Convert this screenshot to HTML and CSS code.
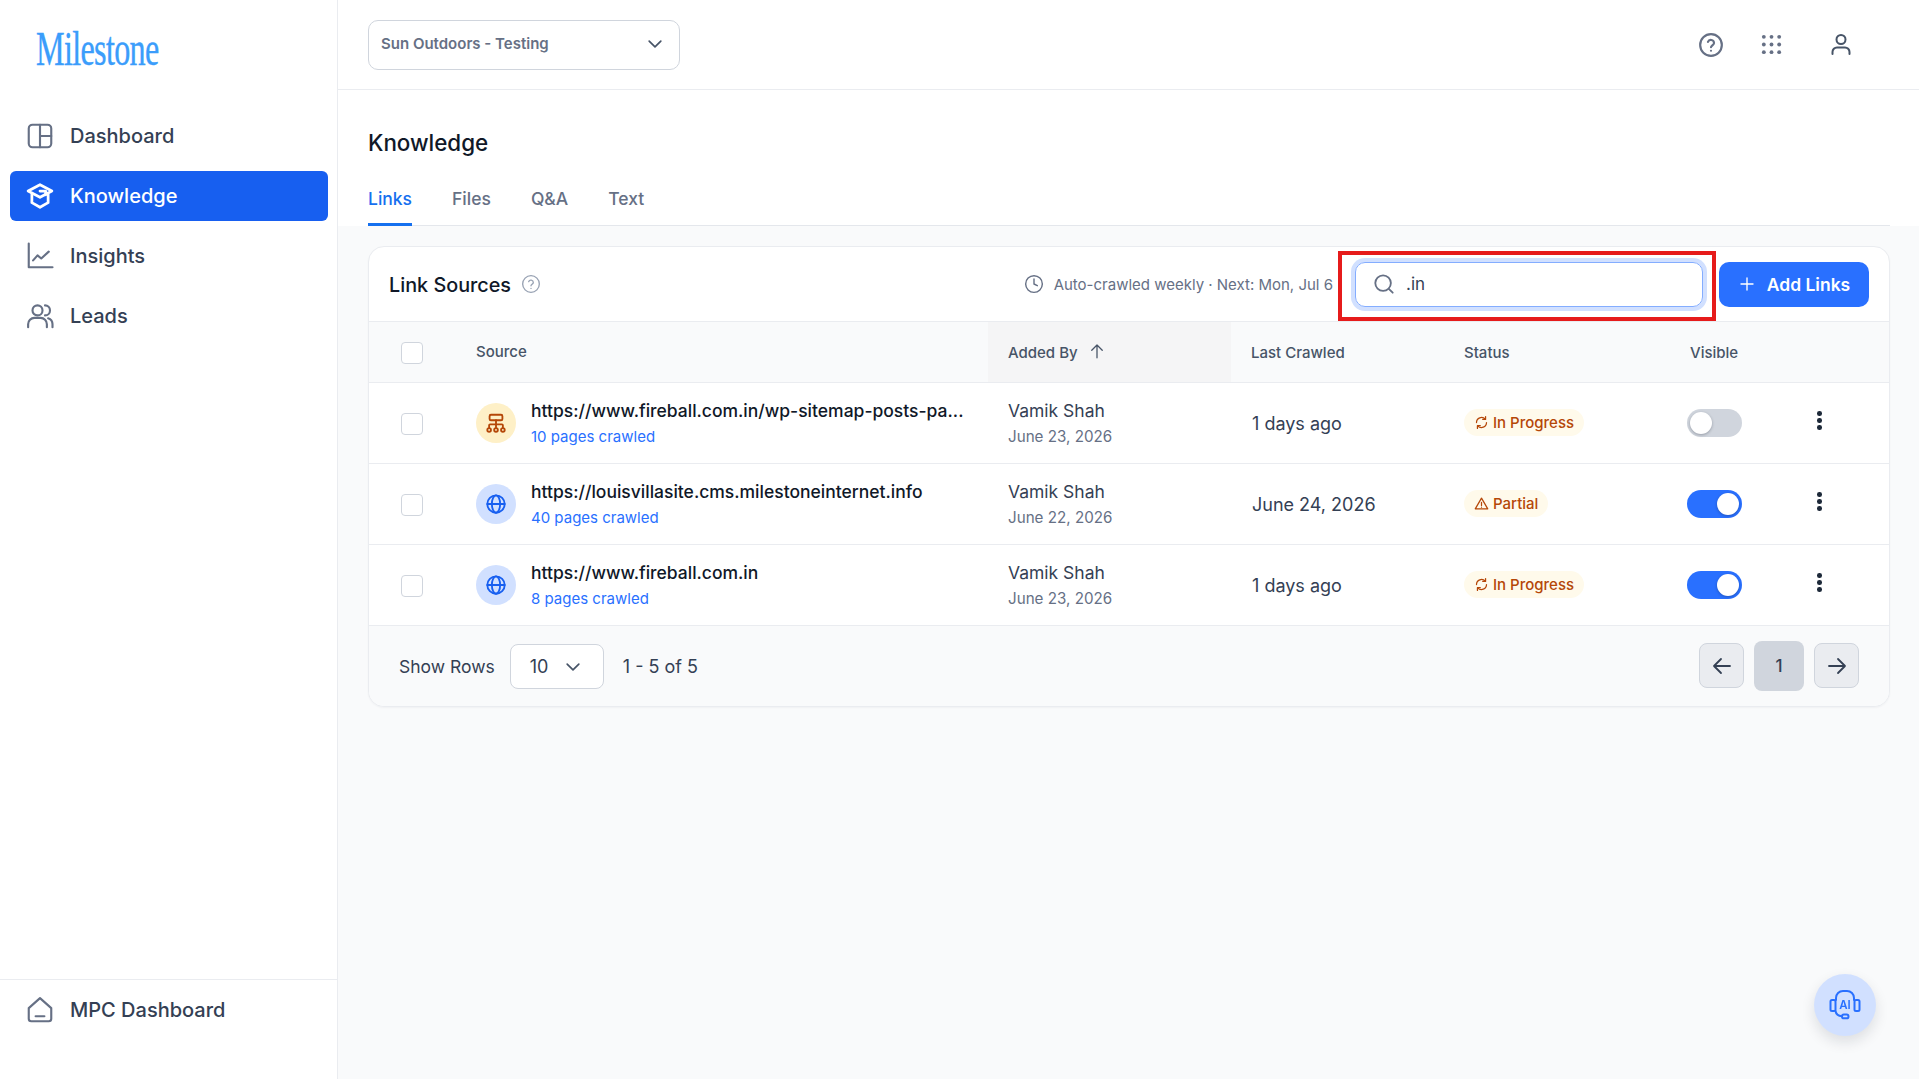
FILE: index.html
```html
<!DOCTYPE html>
<html lang="en">
<head>
    <meta charset="UTF-8">
    <title>Knowledge - Links</title>
    <link rel="stylesheet" href="styles.css">
</head>
<body>
<div class="app">
    <aside class="sidebar">
        <div class="logo"><span class="logo-text">Milestone</span></div>
        <nav class="nav">
            <a class="nav-item">
                <svg class="nav-icon" viewBox="0 0 24 24"><rect x="3" y="3" width="18" height="18" rx="3"/><path d="M12 3v18M12 12h9"/></svg>
                Dashboard
            </a>
            <a class="nav-item active">
                <svg class="nav-icon" viewBox="0 0 24 24"><path d="M12 3 2.500 8l9.500 5 9.500-5z"/><path d="M5.500 10.500v6.800L12 21l6.500-3.700v-6.800"/><path d="M12 8h4.500v3"/></svg>
                Knowledge
            </a>
            <a class="nav-item">
                <svg class="nav-icon" viewBox="0 0 24 24"><path d="M3 2v19h19"/><path d="M6.500 15.500 10 11.500l3 2.500 6-5.500"/></svg>
                Insights
            </a>
            <a class="nav-item">
                <svg class="nav-icon" viewBox="0 0 24 24"><circle cx="10" cy="7.500" r="4"/><path d="M2.500 21v-2.500a5 5 0 0 1 5-5h5a5 5 0 0 1 5 5V21"/><path d="M16 3.500a4 4 0 0 1 0 8"/><path d="M18.500 13.800a5 5 0 0 1 3.500 4.700V21"/></svg>
                Leads
            </a>
        </nav>
        <div class="sidebar-bottom">
            <a class="nav-item">
                <svg class="nav-icon" viewBox="0 0 24 24"><path d="M3 10.500 12 2.500l9 8V19a2 2 0 0 1-2 2H5a2 2 0 0 1-2-2z"/><path d="M8.500 17h7"/></svg>
                MPC Dashboard
            </a>
        </div>
    </aside>

    <main class="main">
        <header class="topbar">
            <div class="property-select">
                <span>Sun Outdoors - Testing</span>
                <svg class="chevron" viewBox="0 0 24 24"><path d="m5 8.500 7 7 7-7"/></svg>
            </div>
            <div class="top-icons">
                <svg class="top-icon help-top" viewBox="0 0 24 24"><circle cx="12" cy="12" r="10"/><path d="M9.200 9.200a2.900 2.900 0 0 1 5.600.9c0 1.900-2.800 2.500-2.800 4"/><path d="M12 17.300h.01"/></svg>
                <svg class="top-icon grid-icon" viewBox="0 0 24 24"><g class="dots"><circle cx="4" cy="4" r="2"/><circle cx="12" cy="4" r="2"/><circle cx="20" cy="4" r="2"/><circle cx="4" cy="12" r="2"/><circle cx="12" cy="12" r="2"/><circle cx="20" cy="12" r="2"/><circle cx="4" cy="20" r="2"/><circle cx="12" cy="20" r="2"/><circle cx="20" cy="20" r="2"/></g></svg>
                <svg class="top-icon user-icon" viewBox="0 0 24 24"><circle cx="12" cy="7.500" r="4.500"/><path d="M3.500 22v-2a4.500 4.500 0 0 1 4.500-4.500h8a4.500 4.500 0 0 1 4.500 4.500v2"/></svg>
            </div>
        </header>

        <section class="page-head">
            <h1 class="page-title">Knowledge</h1>
            <div class="tabs">
                <a class="tab active">Links</a>
                <a class="tab">Files</a>
                <a class="tab">Q&amp;A</a>
                <a class="tab">Text</a>
            </div>
        </section>

        <section class="content">
            <div class="card">
                <div class="card-head">
                    <h2 class="card-title">Link Sources</h2>
                    <svg class="help-icon" viewBox="0 0 24 24"><circle cx="12" cy="12" r="10"/><path d="M9.200 9.200a2.900 2.900 0 0 1 5.600.9c0 1.900-2.800 2.500-2.800 4"/><path d="M12 17.300h.01"/></svg>
                    <div class="crawl-note">
                        <svg class="clock-icon" viewBox="0 0 24 24"><circle cx="12" cy="12" r="10"/><path d="M12 6v6l4 2"/></svg>
                        Auto-crawled weekly · Next: Mon, Jul 6
                    </div>
                    <div class="search-wrap">
                        <div class="search">
                            <svg class="search-icon" viewBox="0 0 24 24"><circle cx="11" cy="11" r="8.500"/><path d="m17.500 17.500 4 4"/></svg>
                            <span>.in</span>
                        </div>
                        <div class="highlight"></div>
                    </div>
                    <button class="add-button">
                        <svg class="plus-icon" viewBox="0 0 24 24"><path d="M12 4v16M4 12h16"/></svg>
                        Add Links
                    </button>
                </div>

                <table class="links-table">
                    <colgroup>
                        <col class="col-check"><col class="col-source"><col class="col-added"><col class="col-crawled"><col class="col-status"><col class="col-visible"><col class="col-menu">
                    </colgroup>
                    <thead>
                        <tr>
                            <th class="check-cell"><span class="checkbox"></span></th>
                            <th class="source-head">Source</th>
                            <th class="sorted">
                                <span class="sort-label">Added By
                                    <svg class="sort-icon" viewBox="0 0 24 24"><path d="M12 21V4M5 11l7-7 7 7"/></svg>
                                </span>
                            </th>
                            <th>Last Crawled</th>
                            <th>Status</th>
                            <th class="visible-head">Visible</th>
                            <th></th>
                        </tr>
                    </thead>
                    <tbody>
                        <tr>
                            <td class="check-cell"><span class="checkbox"></span></td>
                            <td>
                                <div class="source">
                                    <span class="source-icon sitemap">
                                        <svg viewBox="0 0 24 24"><rect x="5" y="3" width="14" height="6" rx="1.500"/><path d="M12 9v8M4.500 17v-2.500a1 1 0 0 1 1-1h13a1 1 0 0 1 1 1V17"/><circle cx="4.500" cy="19.500" r="2"/><circle cx="12" cy="19.500" r="2"/><circle cx="19.500" cy="19.500" r="2"/></svg>
                                    </span>
                                    <div class="source-text">
                                        <div class="source-url">https://www.fireball.com.in/wp-sitemap-posts-pa...</div>
                                        <div class="source-pages">10 pages crawled</div>
                                    </div>
                                </div>
                            </td>
                            <td><div class="person">Vamik Shah</div><div class="person-date">June 23, 2026</div></td>
                            <td class="crawled">1 days ago</td>
                            <td>
                                <span class="badge">
                                    <svg class="badge-icon" viewBox="0 0 24 24"><path d="M20 12a8 8 0 0 1-14 5.300M4 12a8 8 0 0 1 14-5.300"/><path d="M18.500 2.500v4.500H14M5.500 21.500V17H10"/></svg>
                                    In Progress
                                </span>
                            </td>
                            <td><span class="toggle"><span class="knob"></span></span></td>
                            <td><span class="kebab"><i></i><i></i><i></i></span></td>
                        </tr>
                        <tr>
                            <td class="check-cell"><span class="checkbox"></span></td>
                            <td>
                                <div class="source">
                                    <span class="source-icon globe">
                                        <svg viewBox="0 0 24 24"><circle cx="12" cy="12" r="9.500"/><ellipse cx="12" cy="12" rx="4.500" ry="9.500"/><path d="M2.500 12h19"/></svg>
                                    </span>
                                    <div class="source-text">
                                        <div class="source-url">https://louisvillasite.cms.milestoneinternet.info</div>
                                        <div class="source-pages">40 pages crawled</div>
                                    </div>
                                </div>
                            </td>
                            <td><div class="person">Vamik Shah</div><div class="person-date">June 22, 2026</div></td>
                            <td class="crawled">June 24, 2026</td>
                            <td>
                                <span class="badge">
                                    <svg class="badge-icon" viewBox="0 0 24 24"><path d="M12 3.500 2 20.500h20z"/><path d="M12 10v5M12 17.800h.01"/></svg>
                                    Partial
                                </span>
                            </td>
                            <td><span class="toggle on"><span class="knob"></span></span></td>
                            <td><span class="kebab"><i></i><i></i><i></i></span></td>
                        </tr>
                        <tr>
                            <td class="check-cell"><span class="checkbox"></span></td>
                            <td>
                                <div class="source">
                                    <span class="source-icon globe">
                                        <svg viewBox="0 0 24 24"><circle cx="12" cy="12" r="9.500"/><ellipse cx="12" cy="12" rx="4.500" ry="9.500"/><path d="M2.500 12h19"/></svg>
                                    </span>
                                    <div class="source-text">
                                        <div class="source-url">https://www.fireball.com.in</div>
                                        <div class="source-pages">8 pages crawled</div>
                                    </div>
                                </div>
                            </td>
                            <td><div class="person">Vamik Shah</div><div class="person-date">June 23, 2026</div></td>
                            <td class="crawled">1 days ago</td>
                            <td>
                                <span class="badge">
                                    <svg class="badge-icon" viewBox="0 0 24 24"><path d="M20 12a8 8 0 0 1-14 5.300M4 12a8 8 0 0 1 14-5.300"/><path d="M18.500 2.500v4.500H14M5.500 21.500V17H10"/></svg>
                                    In Progress
                                </span>
                            </td>
                            <td><span class="toggle on"><span class="knob"></span></span></td>
                            <td><span class="kebab"><i></i><i></i><i></i></span></td>
                        </tr>
                    </tbody>
                </table>

                <div class="card-foot">
                    <span class="rows-label">Show Rows</span>
                    <div class="rows-select">
                        10
                        <svg class="rows-chevron" viewBox="0 0 24 24"><path d="m5 8.500 7 7 7-7"/></svg>
                    </div>
                    <span class="rows-range">1 - 5 of 5</span>
                    <div class="pager">
                        <button class="page-arrow"><svg viewBox="0 0 24 24"><path d="M20 12H4M11 5l-7 7 7 7"/></svg></button>
                        <button class="page-number">1</button>
                        <button class="page-arrow"><svg viewBox="0 0 24 24"><path d="M4 12h16M13 5l7 7-7 7"/></svg></button>
                    </div>
                </div>
            </div>
        </section>
    </main>
</div>

<button class="ai-button">
    <svg viewBox="0 0 32 32">
        <path d="M7 11V9a7 7 0 0 1 7-7h4a7 7 0 0 1 7 7v2"/>
        <rect x="1.500" y="11" width="5" height="11" rx="1.500"/>
        <rect x="25.500" y="11" width="5" height="11" rx="1.500"/>
        <path d="M6.500 22c.5 3 3 5 6.500 5.300"/>
        <rect x="13" y="25.500" width="6.500" height="3.800" rx="1.900"/>
        <text class="ai-text" x="16" y="19.500" text-anchor="middle">AI</text>
    </svg>
</button>
</body>
</html>
```

FILE: styles.css
```css
* {
    box-sizing: border-box;
}

html, body {
    margin: 0;
    height: 100%;
    overflow: hidden;
}

body {
    font-family: Inter, "Noto Sans", sans-serif;
    color: #101828;
    background: #fff;
}

svg {
    fill: none;
    stroke: currentColor;
    stroke-width: 2;
    stroke-linecap: round;
    stroke-linejoin: round;
    flex-shrink: 0;
}

.app {
    display: flex;
    height: 100%;
}

/* Sidebar */
.sidebar {
    width: 338px;
    flex-shrink: 0;
    display: flex;
    flex-direction: column;
    border-right: 1px solid #eaecf0;
    background: #fff;
}

.logo {
    height: 90px;
    padding: 24px 0 0 36px;
    overflow: hidden;
}

.logo-text {
    display: inline-block;
    font-family: "Liberation Serif", serif;
    font-size: 48px;
    line-height: 50px;
    color: #3b9dfb;
    -webkit-text-stroke: 0.4px #3b9dfb;
    transform: scaleX(0.67);
    transform-origin: left center;
    letter-spacing: -1px;
}

.nav {
    display: flex;
    flex-direction: column;
    gap: 10px;
    padding: 21px 9px 0 10px;
    flex: 1;
}

.nav-item {
    display: flex;
    align-items: center;
    gap: 15px;
    height: 50px;
    padding-left: 15px;
    border-radius: 6px;
    font-size: 20px;
    font-weight: 500;
    color: #344054;
}

.nav-item.active {
    background: #175ff0;
    color: #fff;
}

.nav-icon {
    width: 30px;
    height: 30px;
    color: #667085;
    stroke-width: 1.7;
}

.nav-item.active .nav-icon {
    color: #fff;
    stroke-width: 2.2;
}

.sidebar-bottom {
    height: 100px;
    padding: 5px 9px 0 10px;
    border-top: 1px solid #eaecf0;
}

/* Top bar */
.main {
    flex: 1;
    min-width: 0;
    display: flex;
    flex-direction: column;
}

.topbar {
    height: 90px;
    flex-shrink: 0;
    display: flex;
    align-items: center;
    justify-content: space-between;
    padding: 0 66px 0 30px;
    border-bottom: 1px solid #eaecf0;
}

.property-select {
    width: 312px;
    height: 50px;
    display: flex;
    align-items: center;
    justify-content: space-between;
    padding: 0 14px 2px 12px;
    border: 1px solid #d0d5dd;
    border-radius: 10px;
    font-size: 15px;
    font-weight: 600;
    color: #667085;
}

.chevron {
    width: 20px;
    height: 20px;
    color: #475467;
}

.top-icons {
    display: flex;
    align-items: center;
}

.top-icon {
    width: 24px;
    height: 24px;
    color: #667085;
}

.help-top {
    width: 26px;
    height: 26px;
}

.grid-icon {
    width: 23px;
    height: 23px;
    margin-left: 36px;
}

.grid-icon .dots {
    fill: #667085;
    stroke: none;
}

.user-icon {
    margin: -2px 0 0 46px;
    color: #475467;
}

/* Page heading and tabs */
.page-head {
    flex-shrink: 0;
    padding: 0 29px 0 30px;
    background: #fff;
}

.page-title {
    margin: 0;
    padding-top: 38px;
    font-size: 22.400px;
    line-height: 30px;
    font-weight: 500;
    color: #101828;
}

.tabs {
    display: flex;
    gap: 40px;
    margin-top: 27px;
    height: 41px;
    border-bottom: 1px solid #e4e7ec;
}

.tab {
    height: 41px;
    padding-top: 2px;
    font-size: 17.500px;
    line-height: 24px;
    font-weight: 500;
    color: #667085;
}

.tab.active {
    color: #1570ef;
    border-bottom: 3px solid #1570ef;
}

.content {
    flex: 1;
    padding: 20px 29px 0 30px;
    background: #f9fafb;
}

/* Card */
.card {
    border: 1px solid #eaecf0;
    border-radius: 16px;
    background: #fff;
    overflow: hidden;
    box-shadow: 0 1px 2px rgba(16, 24, 40, 0.04);
}

.card-head {
    height: 75px;
    display: flex;
    align-items: center;
    padding: 0 20px;
    border-bottom: 1px solid #eaecf0;
}

.card-title {
    margin: 2px 0 0;
    font-size: 19.800px;
    font-weight: 500;
    color: #101828;
}

.help-icon {
    width: 20px;
    height: 20px;
    margin-left: 10px;
    color: #98a2b3;
    stroke-width: 1.6;
}

.crawl-note {
    margin-left: auto;
    display: flex;
    align-items: center;
    gap: 10px;
    font-size: 15px;
    color: #667085;
}

.clock-icon {
    width: 20px;
    height: 20px;
    color: #667085;
    stroke-width: 1.7;
}

.search-wrap {
    position: relative;
    margin-left: 22px;
}

.search {
    width: 348px;
    height: 45px;
    display: flex;
    align-items: center;
    gap: 11px;
    padding-left: 17px;
    border: 1px solid #84adff;
    border-radius: 10px;
    box-shadow: 0 0 0 4px #d1e0ff;
    font-size: 17px;
    color: #344054;
}

.search-icon {
    width: 22px;
    height: 22px;
    color: #667085;
    stroke-width: 2;
}

/* red marker drawn over the search field */
.highlight {
    position: absolute;
    top: -11px;
    bottom: -14px;
    left: -17px;
    right: -13px;
    border: 4px solid #e61b1b;
}

.add-button {
    margin-left: 16px;
    width: 150px;
    height: 45px;
    display: flex;
    align-items: center;
    justify-content: center;
    gap: 11px;
    border: none;
    border-radius: 10px;
    background: #2970ff;
    color: #fff;
    font-family: inherit;
    font-size: 17.500px;
    font-weight: 600;
}

.plus-icon {
    width: 18px;
    height: 18px;
    stroke-width: 1.8;
}

/* Table */
.links-table {
    width: 100%;
    border-collapse: collapse;
    table-layout: fixed;
}

.col-check { width: 107px; }
.col-source { width: 512px; }
.col-added { width: 243px; }
.col-crawled { width: 213px; }
.col-status { width: 243px; }
.col-visible { width: 105px; }

.links-table th {
    height: 60px;
    padding: 2px 20px 0;
    background: #f9fafb;
    border-bottom: 1px solid #eaecf0;
    text-align: left;
    font-size: 15px;
    font-weight: 500;
    color: #475467;
}

.links-table .sorted {
    background: #f5f5f6;
}

.sort-label {
    display: inline-flex;
    align-items: center;
    gap: 10px;
}

.sort-icon {
    width: 18px;
    height: 18px;
    margin-top: -4px;
    color: #475467;
    stroke-width: 1.7;
}

.links-table .source-head {
    padding: 0;
}

.links-table .visible-head {
    padding-left: 3px;
}

.links-table td {
    height: 81px;
    padding: 0 20px;
    border-bottom: 1px solid #eaecf0;
    vertical-align: middle;
}

.links-table td:nth-child(2),
.links-table td:nth-child(6) {
    padding: 0;
}

.links-table .check-cell {
    padding: 2px 0 0 32px;
}

.checkbox {
    display: block;
    width: 22px;
    height: 22px;
    border: 1px solid #d0d5dd;
    border-radius: 4px;
    background: #fff;
}

.source {
    display: flex;
    align-items: center;
    gap: 15px;
}

.source-icon {
    width: 40px;
    height: 40px;
    flex-shrink: 0;
    display: flex;
    align-items: center;
    justify-content: center;
    border-radius: 50%;
}

.source-icon svg {
    width: 22px;
    height: 22px;
}

.sitemap {
    background: #fef0c7;
    color: #b54708;
}

.globe {
    background: #d1e0ff;
    color: #175ff0;
}

.source-text {
    min-width: 0;
    margin-top: 1px;
}

.source-url {
    font-size: 17.500px;
    line-height: 24px;
    font-weight: 500;
    white-space: nowrap;
    color: #101828;
}

.source-pages {
    margin-top: 3px;
    font-size: 15px;
    line-height: 22px;
    color: #2970ff;
}

.person {
    margin-top: 2px;
    font-size: 17.500px;
    line-height: 24px;
    color: #344054;
}

.person-date {
    margin-top: 3px;
    font-size: 15.200px;
    line-height: 22px;
    color: #667085;
}

.links-table .crawled {
    padding: 2px 20px 0 21px;
    font-size: 18px;
    color: #344054;
}

.badge {
    display: inline-flex;
    align-items: center;
    gap: 4px;
    height: 27px;
    padding: 0 10px;
    border-radius: 14px;
    background: #fffaeb;
    color: #b54708;
    font-size: 15px;
    font-weight: 500;
}

.badge-icon {
    width: 15px;
    height: 15px;
}

.toggle {
    display: flex;
    width: 55px;
    height: 28px;
    padding: 3px;
    border-radius: 14px;
    background: #d0d5dd;
}

.toggle.on {
    justify-content: flex-end;
    background: #2970ff;
}

.knob {
    width: 22px;
    height: 22px;
    border-radius: 50%;
    background: #fff;
    box-shadow: 0 1px 3px rgba(16, 24, 40, 0.3);
}

.kebab {
    display: flex;
    flex-direction: column;
    gap: 2.200px;
    width: 4.700px;
    margin: -4px 0 0 5px;
}

.kebab i {
    display: block;
    width: 4.700px;
    height: 4.700px;
    border-radius: 50%;
    background: #1d2939;
}

/* Footer */
.card-foot {
    height: 80px;
    display: flex;
    align-items: center;
    padding: 2px 30px 0;
    background: #f9fafb;
    font-size: 17.500px;
    color: #344054;
}

.rows-select {
    margin-left: 15px;
    width: 94px;
    height: 45px;
    display: flex;
    align-items: center;
    gap: 15px;
    padding-left: 19px;
    border: 1px solid #d0d5dd;
    border-radius: 8px;
    background: #fff;
    font-size: 18px;
}

.rows-chevron {
    width: 20px;
    height: 20px;
    color: #475467;
}

.rows-range {
    margin-left: 19px;
    font-size: 18px;
}

.pager {
    margin: -2px 0 0 auto;
    display: flex;
    align-items: center;
    gap: 10px;
}

.page-arrow {
    width: 45px;
    height: 45px;
    display: flex;
    align-items: center;
    justify-content: center;
    padding: 0;
    border: 1px solid #d0d5dd;
    border-radius: 8px;
    background: #eaecf0;
    color: #344054;
}

.page-arrow svg {
    width: 24px;
    height: 24px;
    stroke-width: 1.8;
}

.page-number {
    width: 50px;
    height: 50px;
    border: none;
    border-radius: 8px;
    background: #d0d5dd;
    color: #344054;
    font-family: inherit;
    font-size: 17px;
    font-weight: 500;
}

/* Floating help button, sits over the page */
.ai-button {
    position: fixed;
    right: 43px;
    bottom: 43px;
    width: 62px;
    height: 62px;
    display: flex;
    align-items: center;
    justify-content: center;
    padding: 0;
    border: none;
    border-radius: 50%;
    background: #d1e0ff;
    box-shadow: 0 6px 14px rgba(16, 24, 40, 0.12);
    color: #2970ff;
}

.ai-button svg {
    width: 32px;
    height: 32px;
}

.ai-text {
    fill: #2970ff;
    stroke: none;
    font-family: Inter, sans-serif;
    font-size: 11.500px;
    font-weight: 600;
}
```
